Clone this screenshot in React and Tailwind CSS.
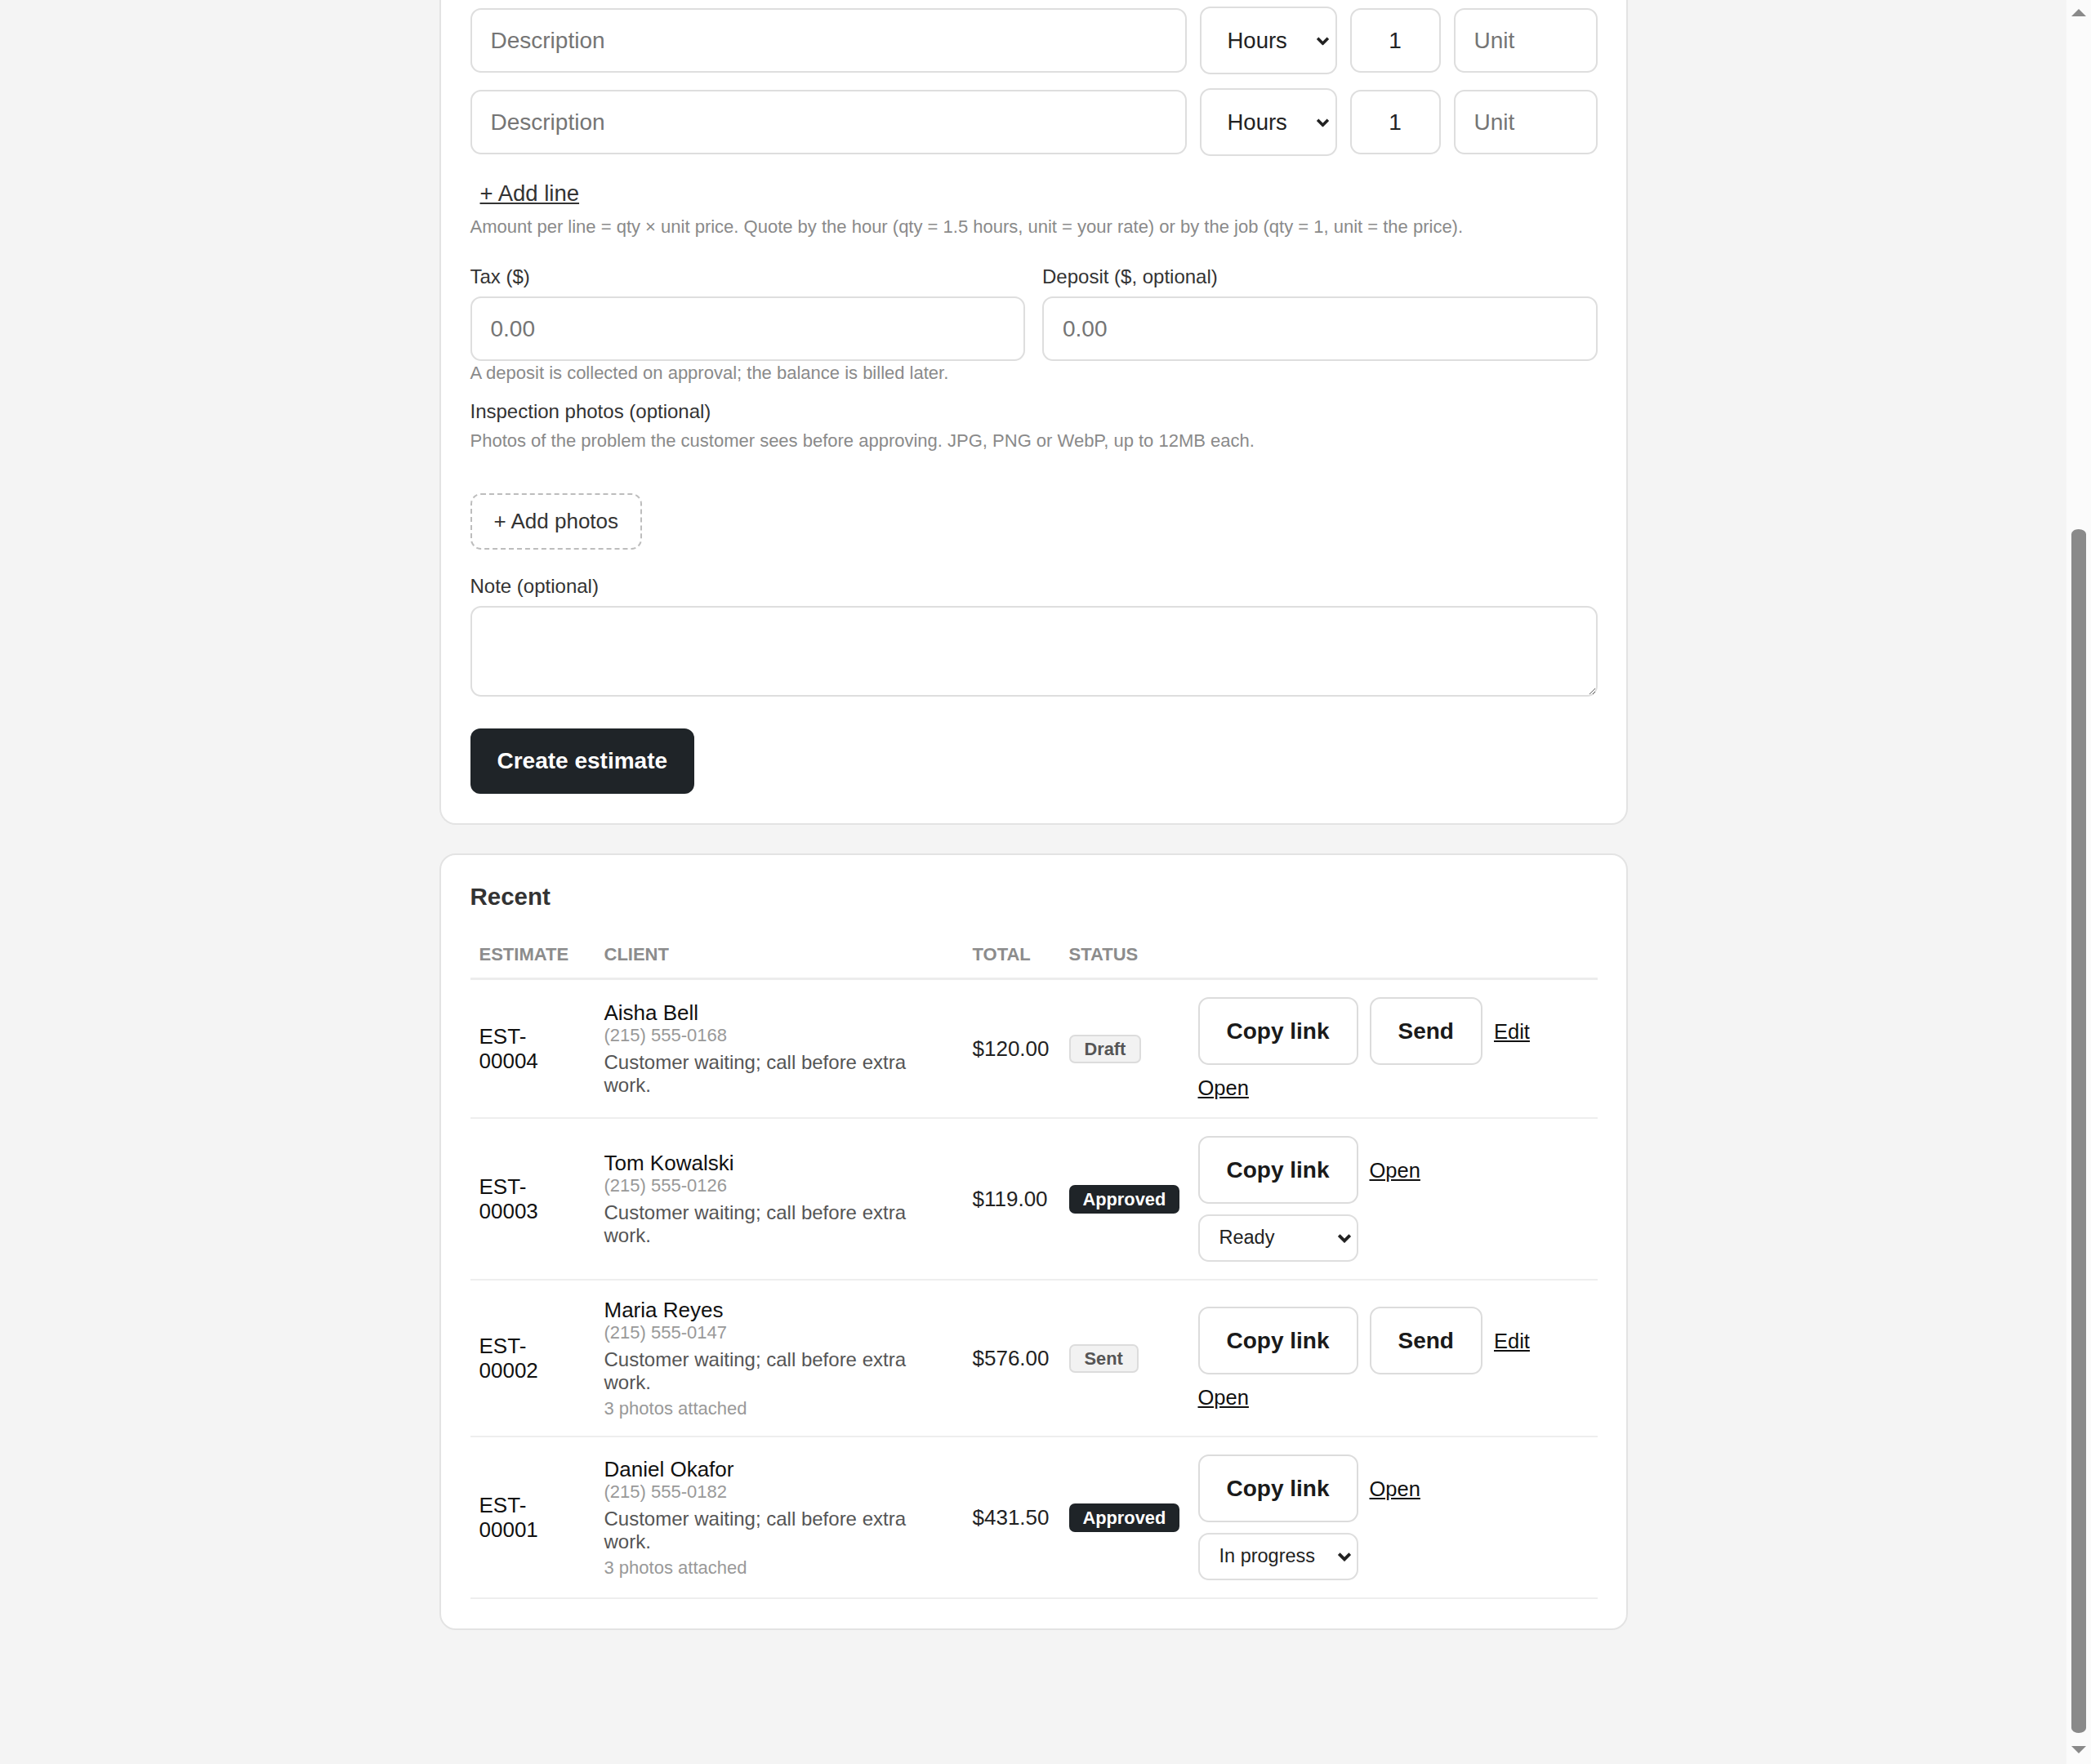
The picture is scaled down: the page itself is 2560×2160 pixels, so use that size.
import React from 'react';

const estimates = [
  { id: 'EST-00004', name: 'Aisha Bell', phone: '(215) 555-0168', total: '$120.00', status: 'Draft', photos: 0, job: null },
  { id: 'EST-00003', name: 'Tom Kowalski', phone: '(215) 555-0126', total: '$119.00', status: 'Approved', photos: 0, job: 'Ready' },
  { id: 'EST-00002', name: 'Maria Reyes', phone: '(215) 555-0147', total: '$576.00', status: 'Sent', photos: 3, job: null },
  { id: 'EST-00001', name: 'Daniel Okafor', phone: '(215) 555-0182', total: '$431.50', status: 'Approved', photos: 3, job: 'In progress' },
];

const jobOptions = ['Ready', 'In progress', 'Done'];

const Chevron = ({ className }) => (
  <svg viewBox="0 0 16 10" className={className} fill="none" stroke="currentColor" strokeWidth="3.4" strokeLinejoin="miter">
    <path d="M2 2l6 6 6-6" />
  </svg>
);

const Select = ({ value, options, className, selectClass, chevronClass }) => (
  <div className={`relative ${className}`}>
    <select
      defaultValue={value}
      className={`h-full w-full appearance-none rounded-[13px] border-2 border-[#dedede] bg-white text-[#222] outline-none ${selectClass}`}
    >
      {options.map((o) => (
        <option key={o}>{o}</option>
      ))}
    </select>
    <Chevron className={`pointer-events-none absolute top-1/2 -translate-y-1/2 text-[#222] ${chevronClass}`} />
  </div>
);

const inputCls =
  'h-[79px] rounded-[13px] border-2 border-[#dedede] bg-white px-[23px] text-[28px] text-[#222] placeholder:text-[#757575] outline-none';

const LineRow = () => (
  <div className="flex items-center gap-[16px]">
    <input placeholder="Description" className={`${inputCls} min-w-0 flex-1`} />
    <Select
      value="Hours"
      options={['Hours', 'Job']}
      className="h-[83px] w-[168px]"
      selectClass="pl-[32px] text-[27.5px]"
      chevronClass="right-[9px] h-[11px] w-[17px]"
    />
    <input defaultValue="1" className={`${inputCls} w-[111px] text-center`} />
    <input placeholder="Unit" className={`${inputCls} w-[176px]`} />
  </div>
);

const Badge = ({ status }) => {
  const dark = status === 'Approved';
  return (
    <span
      className={`inline-block rounded-[7px] border-2 text-[21.8px] font-bold leading-[31px] ${
        dark ? 'border-[#1f2428] bg-[#1f2428] px-[15px] text-white' : 'border-[#dcdcdc] bg-[#f2f2f2] px-[17px] text-[#555]'
      }`}
    >
      {status}
    </span>
  );
};

const OutlineButton = ({ children }) => (
  <button className="h-[83px] rounded-[13px] border-2 border-[#dcdcdc] bg-white px-[33px] text-[28px] font-bold text-[#1a1a1a]">
    {children}
  </button>
);

const TextLink = ({ children }) => (
  <a href="#" className="text-[25.5px] leading-[30px] text-[#111] underline">
    {children}
  </a>
);

const Scrollbar = () => (
  <div className="flex h-full w-[30px] shrink-0 flex-col items-center bg-[#fbfbfb] pt-[11px]">
    <svg viewBox="0 0 18 9" className="h-[9px] w-[18px] text-[#8a8a8a]" fill="currentColor">
      <path d="M0 9L9 0l9 9z" />
    </svg>
    <div className="mt-[628px] h-[1474px] w-[18px] rounded-[9px/6px] bg-[#8a8a8a]" />
    <svg viewBox="0 0 18 9" className="mt-[16px] h-[9px] w-[18px] text-[#8a8a8a]" fill="currentColor">
      <path d="M0 0h18L9 9z" />
    </svg>
  </div>
);

export default function App() {
  return (
    <div className="flex h-screen overflow-hidden bg-[#f4f4f4] font-['Liberation_Sans',Arial,sans-serif] text-[#222]">
      <div className="min-w-0 flex-1">
        <div className="mx-auto w-[1455px]">
          {/* estimate form (top part scrolled away) */}
          <div className="rounded-b-[20px] border-2 border-t-0 border-[#e3e3e3] bg-white pb-[36px] pl-[36px] pr-[35px] pt-[8px]">
            <div className="flex flex-col gap-[17px]">
              <LineRow />
              <LineRow />
            </div>
            <button className="ml-[12px] mt-[29px] block text-[27.5px] leading-[34px] text-[#333] underline">+ Add line</button>
            <p className="mt-[11px] text-[22px] leading-[25px] text-[#8a8a8a]">
              Amount per line = qty × unit price. Quote by the hour (qty = 1.5 hours, unit = your rate) or by the job (qty = 1, unit = the price).
            </p>

            <div className="mt-[35px] grid grid-cols-2 gap-x-[21px]">
              <label className="flex flex-col">
                <span className="text-[24px] leading-[28px] text-[#333]">Tax ($)</span>
                <input placeholder="0.00" className={`${inputCls} mt-[10px] w-full`} />
              </label>
              <label className="flex flex-col">
                <span className="text-[24px] leading-[28px] text-[#333]">Deposit ($, optional)</span>
                <input placeholder="0.00" className={`${inputCls} mt-[10px] w-full`} />
              </label>
            </div>
            <p className="mt-[2px] text-[22px] leading-[25px] text-[#8a8a8a]">A deposit is collected on approval; the balance is billed later.</p>

            <div className="mt-[21px] text-[24px] leading-[28px] text-[#333]">Inspection photos (optional)</div>
            <p className="mt-[9px] text-[22px] leading-[25px] text-[#8a8a8a]">
              Photos of the problem the customer sees before approving. JPG, PNG or WebP, up to 12MB each.
            </p>
            <button className="mt-[52px] block h-[69px] rounded-[13px] border-2 border-dashed border-[#bdbdbd] px-[27px] text-[26px] text-[#333]">
              + Add photos
            </button>

            <div className="mt-[31px] text-[24px] leading-[28px] text-[#333]">Note (optional)</div>
            <textarea className="mt-[10px] block h-[111px] w-full rounded-[13px] border-2 border-[#dedede] bg-white p-[20px] text-[28px] outline-none" />

            <button className="mt-[39px] block h-[80px] rounded-[12px] bg-[#1f2428] px-[33px] text-[28px] font-bold text-white">
              Create estimate
            </button>
          </div>

          {/* recent estimates */}
          <div className="mt-[35px] rounded-[20px] border-2 border-[#e3e3e3] bg-white pb-[36px] pl-[36px] pr-[35px] pt-[36px]">
            <h2 className="text-[29.5px] font-bold leading-[30px] text-[#333]">Recent</h2>
            <table className="mt-[24px] w-full table-fixed border-collapse text-left">
              <colgroup>
                <col className="w-[153px]" />
                <col className="w-[451px]" />
                <col className="w-[118px]" />
                <col className="w-[158px]" />
                <col />
              </colgroup>
              <thead>
                <tr className="border-b-[3px] border-[#ececec]">
                  {['Estimate', 'Client', 'Total', 'Status', ''].map((h, i) => (
                    <th key={i} className="px-[11px] pb-[16px] pt-[19px] text-[22px] font-bold uppercase leading-[25px] text-[#8c8c8c]">
                      {h}
                    </th>
                  ))}
                </tr>
              </thead>
              <tbody>
                {estimates.map((e) => (
                  <tr key={e.id} className="border-b-2 border-[#eeeeee] align-middle">
                    <td className="px-[11px] py-[21px]">
                      <div className="w-[110px] text-[26px] leading-[30px] text-[#111]">{e.id}</div>
                    </td>
                    <td className="py-[21px] pl-[11px] pr-[30px]">
                      <div className="text-[26px] leading-[30px] text-[#111]">{e.name}</div>
                      <div className="text-[22px] leading-[25px] text-[#999]">{e.phone}</div>
                      <div className="mt-[7px] text-[24px] leading-[28px] text-[#555]">Customer waiting; call before extra work.</div>
                      {e.photos > 0 && (
                        <div className="mt-[5px] text-[22px] leading-[25px] text-[#999]">{e.photos} photos attached</div>
                      )}
                    </td>
                    <td className="px-[11px] py-[21px] text-[26px] text-[#222]">{e.total}</td>
                    <td className="px-[11px] py-[21px]">
                      <Badge status={e.status} />
                    </td>
                    <td className="px-[11px] py-[21px]">
                      <div className="flex w-[440px] flex-wrap items-center gap-x-[14px] gap-y-[13px]">
                        <OutlineButton>Copy link</OutlineButton>
                        {e.status !== 'Approved' && <OutlineButton>Send</OutlineButton>}
                        {e.status !== 'Approved' && <TextLink>Edit</TextLink>}
                        <TextLink>Open</TextLink>
                        {e.job && (
                          <Select
                            value={e.job}
                            options={jobOptions}
                            className="h-[58px] w-[196px]"
                            selectClass="pl-[24px] text-[23.5px]"
                            chevronClass="right-[8px] h-[12px] w-[18px]"
                          />
                        )}
                      </div>
                    </td>
                  </tr>
                ))}
              </tbody>
            </table>
          </div>
        </div>
      </div>
      <Scrollbar />
    </div>
  );
}
